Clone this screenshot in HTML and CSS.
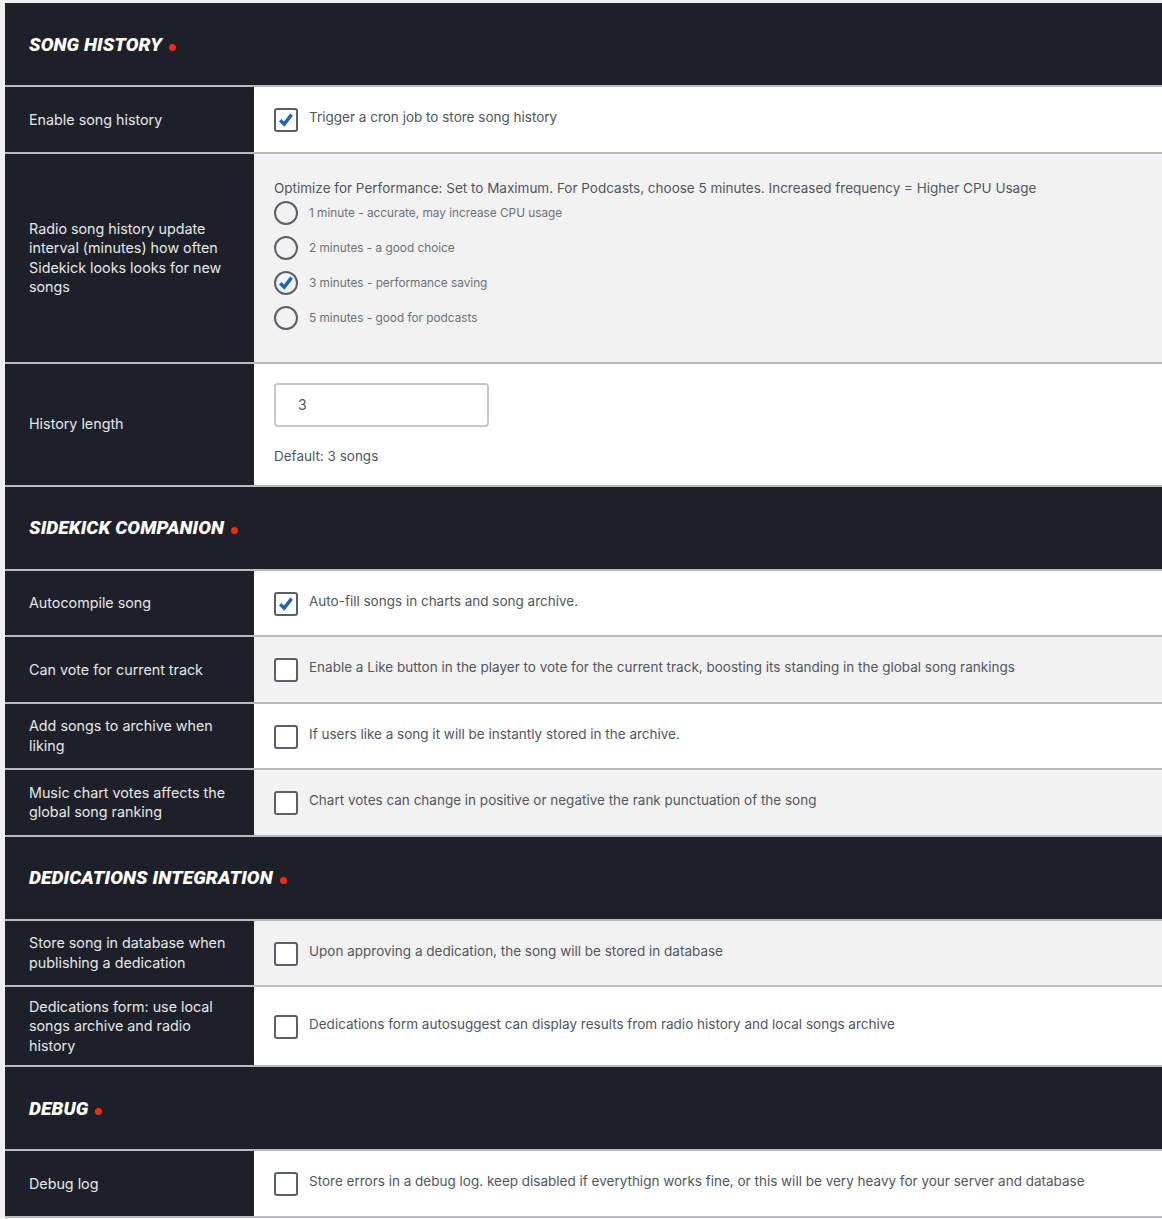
FILE: index.html
```html
<!DOCTYPE html>
<html lang="en">
<head>
<meta charset="UTF-8">
<meta name="viewport" content="width=device-width, initial-scale=1.0">
<title>Song history settings</title>
<link rel="stylesheet" href="styles.css">
</head>
<body>

<div class="settings">

  <div class="section-head"><h2>Song History</h2><span class="dot"></span></div>

  <div class="row">
    <div class="label">Enable song history</div>
    <div class="field">
      <label class="check">
        <span class="box"><svg viewBox="0 0 20 20"><path d="M3.6 10.2 L8 14.6 L16.2 4"/></svg></span>
        Trigger a cron job to store song history
      </label>
    </div>
  </div>

  <div class="row alt">
    <div class="label">Radio song history update interval (minutes) how often Sidekick looks looks for new songs</div>
    <div class="field radios">
      <p class="desc">Optimize for Performance: Set to Maximum. For Podcasts, choose 5 minutes. Increased frequency = Higher CPU Usage</p>
      <label class="radio"><span class="circle"></span>1 minute - accurate, may increase CPU usage</label>
      <label class="radio"><span class="circle"></span>2 minutes - a good choice</label>
      <label class="radio"><span class="circle"><svg viewBox="0 0 20 20"><path d="M3.6 10.2 L8 14.6 L16.2 4"/></svg></span>3 minutes - performance saving</label>
      <label class="radio"><span class="circle"></span>5 minutes - good for podcasts</label>
    </div>
  </div>

  <div class="row">
    <div class="label">History length</div>
    <div class="field stack">
      <input class="num" type="text" value="3">
      <p class="desc">Default: 3 songs</p>
    </div>
  </div>

  <div class="section-head"><h2>Sidekick Companion</h2><span class="dot"></span></div>

  <div class="row">
    <div class="label">Autocompile song</div>
    <div class="field">
      <label class="check">
        <span class="box"><svg viewBox="0 0 20 20"><path d="M3.6 10.2 L8 14.6 L16.2 4"/></svg></span>
        Auto-fill songs in charts and song archive.
      </label>
    </div>
  </div>

  <div class="row alt">
    <div class="label">Can vote for current track</div>
    <div class="field">
      <label class="check"><span class="box"></span>Enable a Like button in the player to vote for the current track, boosting its standing in the global song rankings</label>
    </div>
  </div>

  <div class="row">
    <div class="label">Add songs to archive when liking</div>
    <div class="field">
      <label class="check"><span class="box"></span>If users like a song it will be instantly stored in the archive.</label>
    </div>
  </div>

  <div class="row alt">
    <div class="label">Music chart votes affects the global song ranking</div>
    <div class="field">
      <label class="check"><span class="box"></span>Chart votes can change in positive or negative the rank punctuation of the song</label>
    </div>
  </div>

  <div class="section-head"><h2>Dedications Integration</h2><span class="dot"></span></div>

  <div class="row alt">
    <div class="label">Store song in database when publishing a dedication</div>
    <div class="field">
      <label class="check"><span class="box"></span>Upon approving a dedication, the song will be stored in database</label>
    </div>
  </div>

  <div class="row tall">
    <div class="label">Dedications form: use local songs archive and radio history</div>
    <div class="field">
      <label class="check"><span class="box"></span>Dedications form autosuggest can display results from radio history and local songs archive</label>
    </div>
  </div>

  <div class="section-head"><h2>Debug</h2><span class="dot"></span></div>

  <div class="row">
    <div class="label">Debug log</div>
    <div class="field">
      <label class="check"><span class="box"></span>Store errors in a debug log. keep disabled if everythign works fine, or this will be very heavy for your server and database</label>
    </div>
  </div>

</div>

</body>
</html>
```

FILE: styles.css
```css
body {
  margin: 0;
  padding: 3px 0 0 5px;
  background-color: #f0f0f1;
  font-family: Inter, "Noto Sans", sans-serif;
  font-size: 13.5px;
  color: #50575e;
}
.settings {
  display: flex;
  flex-direction: column;
  gap: 2px;
  background-color: #b8babf;
  padding-bottom: 2px;
}
.section-head {
  background-color: #1d2028;
  height: 82px;
  display: flex;
  align-items: center;
  padding-left: 24px;
}
.section-head h2 {
  margin: 0;
  font-family: Roboto, sans-serif;
  font-weight: 900;
  font-style: italic;
  font-size: 19px;
  letter-spacing: 0.1px;
  text-transform: uppercase;
  color: #fff;
}
.dot {
  width: 7px;
  height: 7px;
  border-radius: 50%;
  background-color: #f02b0f;
  margin: 6px 0 0 7px;
}
.row {
  display: grid;
  grid-template-columns: 249px 1fr;
  min-height: 64.5px;
}
.row.tall {
  min-height: 78px;
}
.label {
  background-color: #1d2028;
  color: #e6e7e9;
  font-size: 14.3px;
  padding: 0 24px;
  line-height: 19.5px;
  display: flex;
  align-items: center;
}
.field {
  background-color: #fff;
  padding: 20px 20px;
  display: flex;
  flex-direction: column;
  justify-content: center;
}
.row.alt .field {
  background-color: #f2f2f3;
}
.field.radios {
  padding: 24px 20px 26px;
}
.field.stack {
  padding: 19px 20px 19px;
}
.desc {
  margin: 0;
  line-height: 20px;
}
.check {
  display: flex;
  align-items: center;
  gap: 11px;
  line-height: 20px;
  margin-top: -6px;
  margin-bottom: -2px;
}
.check .box {
  margin-top: 6px;
}
.box,
.circle {
  width: 20px;
  height: 20px;
  border: 2px solid #5a6068;
  border-radius: 3px;
  background-color: #fff;
  flex-shrink: 0;
  display: flex;
  align-items: center;
  justify-content: center;
}
.circle {
  border-radius: 50%;
  background-color: transparent;
}
.box svg,
.circle svg {
  width: 18px;
  height: 18px;
  fill: none;
  stroke: #1e63b8;
  stroke-width: 3.8;
}
.radio {
  display: flex;
  align-items: center;
  gap: 11px;
  font-size: 11.8px;
  color: #6c7178;
  height: 35px;
}
.radio:first-of-type {
  margin-top: -2px;
}
.num {
  width: 215px;
  height: 44px;
  box-sizing: border-box;
  border: 2px solid #c6c7ca;
  border-radius: 4px;
  padding: 0 22px;
  font-family: Inter, sans-serif;
  font-size: 14px;
  color: #50575e;
  margin-bottom: 19px;
}
```
